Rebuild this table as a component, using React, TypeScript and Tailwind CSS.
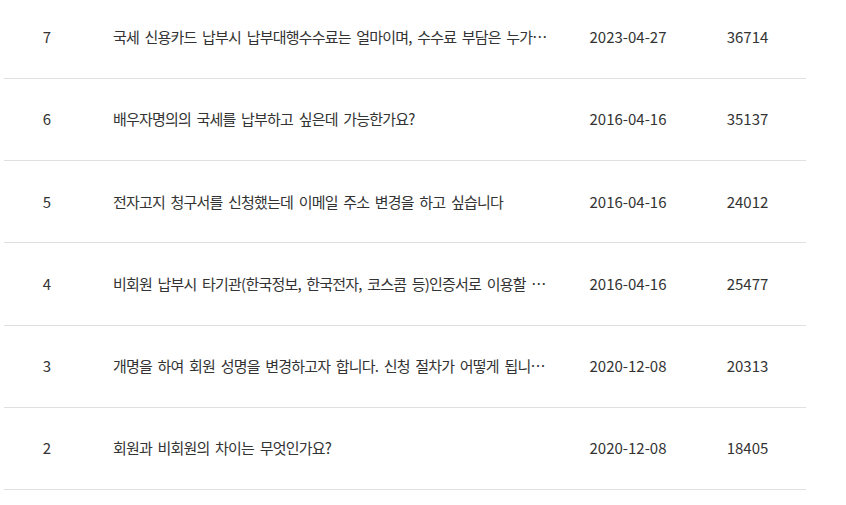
import React from 'react';

interface FaqRow {
  no: number;
  title: string;
  date: string;
  views: number;
}

const rows: FaqRow[] = [
  { no: 7, title: '국세 신용카드 납부시 납부대행수수료는 얼마이며, 수수료 부담은 누가 하나요?', date: '2023-04-27', views: 36714 },
  { no: 6, title: '배우자명의의 국세를 납부하고 싶은데 가능한가요?', date: '2016-04-16', views: 35137 },
  { no: 5, title: '전자고지 청구서를 신청했는데 이메일 주소 변경을 하고 싶습니다', date: '2016-04-16', views: 24012 },
  { no: 4, title: '비회원 납부시 타기관(한국정보, 한국전자, 코스콤 등)인증서로 이용할 수 있나요?', date: '2016-04-16', views: 25477 },
  { no: 3, title: '개명을 하여 회원 성명을 변경하고자 합니다. 신청 절차가 어떻게 됩니까?', date: '2020-12-08', views: 20313 },
  { no: 2, title: '회원과 비회원의 차이는 무엇인가요?', date: '2020-12-08', views: 18405 },
];

export default function App() {
  return (
    <div
      className="w-[846px] h-[505px] overflow-hidden bg-white text-[#333] text-[15px]"
      style={{ fontFamily: '"Noto Sans CJK KR", "Noto Sans", sans-serif' }}
    >
      <ul className="ml-[4px] w-[802px] mt-[-3.2px]">
        {rows.map((row) => (
          <li
            key={row.no}
            className="flex items-center h-[82.2px] border-b border-[#e0e0e0]"
          >
            <div className="w-[86px] text-center">{row.no}</div>
            <div className="w-[477px] pl-[23px] pr-[18.5px] truncate tracking-[-0.8px] [word-spacing:3px]">
              {row.title}
            </div>
            <div className="w-[122px] text-center">{row.date}</div>
            <div className="w-[117px] text-center">{row.views}</div>
          </li>
        ))}
      </ul>
    </div>
  );
}
